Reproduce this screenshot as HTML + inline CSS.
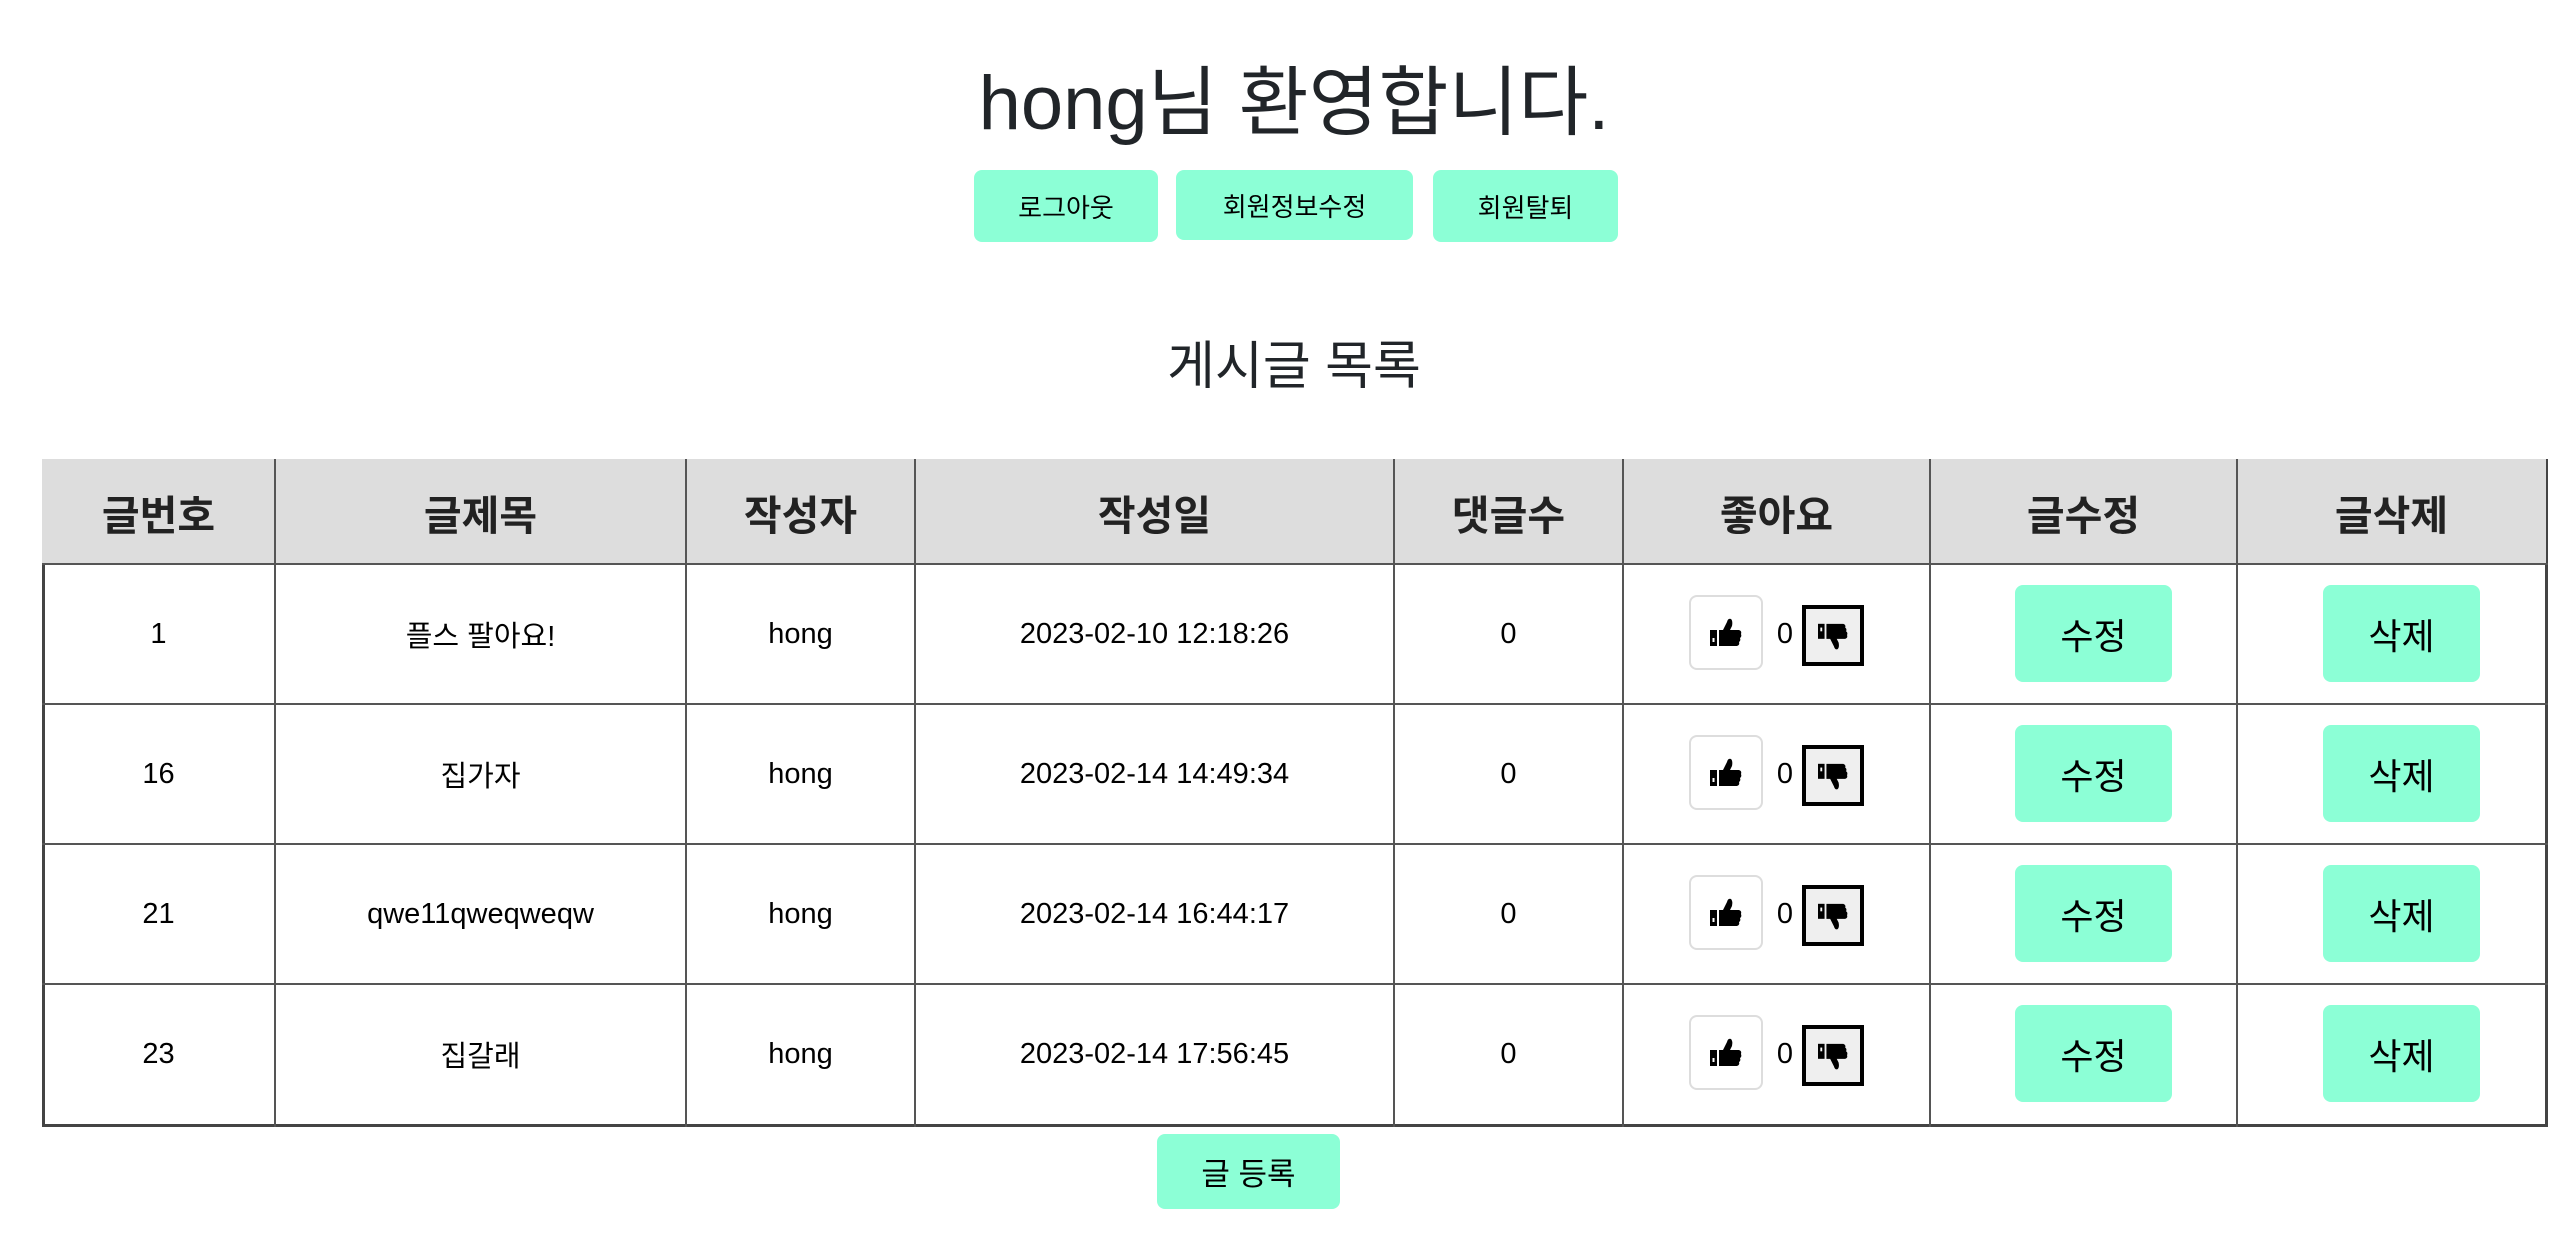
<!DOCTYPE html>
<html><head><meta charset="utf-8"><style>
body{margin:0;width:2562px;height:1238px;background:#fff;font-family:"Liberation Sans","Noto Sans CJK KR",sans-serif;color:#212529;position:relative;overflow:hidden}
.a{position:absolute}
.btn{position:absolute;background:#8cffd6;border-radius:8px;display:flex;align-items:center;justify-content:center;color:#000}
.cell{position:absolute;display:flex;align-items:center;justify-content:center;box-sizing:border-box}
.h{background:#ddd;font-weight:bold;font-size:41px;color:#222}
.b{font-size:29px;color:#000}
.vl{position:absolute;top:459px;width:2px;height:668px;background:#555}
.hl{position:absolute;left:42px;width:2506px;height:2px;background:#555}
.like{position:absolute;left:1689px;width:74px;height:75px;border:2px solid #ddd;border-radius:8px;background:#fff;box-sizing:border-box;display:flex;align-items:center;justify-content:center}
.dis{position:absolute;left:1802px;width:62px;height:61px;border:4px solid #000;background:#efefef;box-sizing:border-box;display:flex;align-items:center;justify-content:center}
.cnt{position:absolute;left:1774px;width:22px;text-align:center;font-size:29px;color:#000}
</style></head><body>
<div class="a" style="left:0;width:2588px;top:49px;text-align:center;font-size:76px;line-height:110px">hong님 환영합니다.</div>
<div class="btn" style="left:974px;top:170px;width:184px;height:72px;font-size:26px">로그아웃</div>
<div class="btn" style="left:1176px;top:170px;width:237px;height:70px;font-size:26px">회원정보수정</div>
<div class="btn" style="left:1433px;top:170px;width:185px;height:72px;font-size:26px">회원탈퇴</div>
<div class="a" style="left:0;width:2588px;top:330px;text-align:center;font-size:52px;line-height:74px">게시글 목록</div>

<div class="a" style="left:42px;top:459px;width:2506px;height:668px;border:3px solid #444;box-sizing:border-box"></div>
<div class="a" style="left:45px;top:462px;width:2500px;height:101px;background:#ddd"></div>
<div class="cell h" style="left:42px;top:459px;width:233px;height:105px">글번호</div>
<div class="cell h" style="left:275px;top:459px;width:411px;height:105px">글제목</div>
<div class="cell h" style="left:686px;top:459px;width:229px;height:105px">작성자</div>
<div class="cell h" style="left:915px;top:459px;width:479px;height:105px">작성일</div>
<div class="cell h" style="left:1394px;top:459px;width:229px;height:105px">댓글수</div>
<div class="cell h" style="left:1623px;top:459px;width:307px;height:105px">좋아요</div>
<div class="cell h" style="left:1930px;top:459px;width:307px;height:105px">글수정</div>
<div class="cell h" style="left:2237px;top:459px;width:309px;height:105px">글삭제</div>

<div class="vl" style="left:274px"></div><div class="vl" style="left:685px"></div><div class="vl" style="left:914px"></div><div class="vl" style="left:1393px"></div><div class="vl" style="left:1622px"></div><div class="vl" style="left:1929px"></div><div class="vl" style="left:2236px"></div>
<div class="hl" style="top:563px"></div><div class="hl" style="top:703px"></div><div class="hl" style="top:843px"></div><div class="hl" style="top:983px"></div>

<svg width="0" height="0" style="position:absolute"><defs>
<g id="up"><rect x="0" y="12" width="7" height="16" fill="#000"/><rect x="2.5" y="20" width="2" height="4" fill="#fff"/><path d="M9 12 L13 12 L17 4 Q18 0 21 1 Q23 3 22 8 L20 12 L29 12 Q32 13 31 16 Q32 19 30 20 Q31 23 29 24 Q30 27 27 28 L9 28 Z" fill="#000"/></g>
</defs></svg>

<div class="cell b" style="left:42px;top:564px;width:233px;height:140px">1</div>
<div class="cell b" style="left:275px;top:564px;width:411px;height:140px">플스 팔아요!</div>
<div class="cell b" style="left:686px;top:564px;width:229px;height:140px">hong</div>
<div class="cell b" style="left:915px;top:564px;width:479px;height:140px">2023-02-10 12:18:26</div>
<div class="cell b" style="left:1394px;top:564px;width:229px;height:140px">0</div>

<div class="cell b" style="left:42px;top:704px;width:233px;height:140px">16</div>
<div class="cell b" style="left:275px;top:704px;width:411px;height:140px">집가자</div>
<div class="cell b" style="left:686px;top:704px;width:229px;height:140px">hong</div>
<div class="cell b" style="left:915px;top:704px;width:479px;height:140px">2023-02-14 14:49:34</div>
<div class="cell b" style="left:1394px;top:704px;width:229px;height:140px">0</div>

<div class="cell b" style="left:42px;top:844px;width:233px;height:140px">21</div>
<div class="cell b" style="left:275px;top:844px;width:411px;height:140px">qwe11qweqweqw</div>
<div class="cell b" style="left:686px;top:844px;width:229px;height:140px">hong</div>
<div class="cell b" style="left:915px;top:844px;width:479px;height:140px">2023-02-14 16:44:17</div>
<div class="cell b" style="left:1394px;top:844px;width:229px;height:140px">0</div>

<div class="cell b" style="left:42px;top:984px;width:233px;height:140px">23</div>
<div class="cell b" style="left:275px;top:984px;width:411px;height:140px">집갈래</div>
<div class="cell b" style="left:686px;top:984px;width:229px;height:140px">hong</div>
<div class="cell b" style="left:915px;top:984px;width:479px;height:140px">2023-02-14 17:56:45</div>
<div class="cell b" style="left:1394px;top:984px;width:229px;height:140px">0</div>

<div class="like" style="top:595px"><svg width="32" height="30" viewBox="0 0 32 30"><use href="#up"/></svg></div>
<div class="cnt" style="top:618px">0</div>
<div class="dis" style="top:605px"><svg width="30" height="30" viewBox="0 0 32 30"><g transform="translate(0,30) scale(1,-1)"><use href="#up"/></g></svg></div>

<div class="like" style="top:735px"><svg width="32" height="30" viewBox="0 0 32 30"><use href="#up"/></svg></div>
<div class="cnt" style="top:758px">0</div>
<div class="dis" style="top:745px"><svg width="30" height="30" viewBox="0 0 32 30"><g transform="translate(0,30) scale(1,-1)"><use href="#up"/></g></svg></div>

<div class="like" style="top:875px"><svg width="32" height="30" viewBox="0 0 32 30"><use href="#up"/></svg></div>
<div class="cnt" style="top:898px">0</div>
<div class="dis" style="top:885px"><svg width="30" height="30" viewBox="0 0 32 30"><g transform="translate(0,30) scale(1,-1)"><use href="#up"/></g></svg></div>

<div class="like" style="top:1015px"><svg width="32" height="30" viewBox="0 0 32 30"><use href="#up"/></svg></div>
<div class="cnt" style="top:1038px">0</div>
<div class="dis" style="top:1025px"><svg width="30" height="30" viewBox="0 0 32 30"><g transform="translate(0,30) scale(1,-1)"><use href="#up"/></g></svg></div>

<div class="btn" style="left:2015px;top:585px;width:157px;height:97px;font-size:36px">수정</div>
<div class="btn" style="left:2323px;top:585px;width:157px;height:97px;font-size:36px">삭제</div>
<div class="btn" style="left:2015px;top:725px;width:157px;height:97px;font-size:36px">수정</div>
<div class="btn" style="left:2323px;top:725px;width:157px;height:97px;font-size:36px">삭제</div>
<div class="btn" style="left:2015px;top:865px;width:157px;height:97px;font-size:36px">수정</div>
<div class="btn" style="left:2323px;top:865px;width:157px;height:97px;font-size:36px">삭제</div>
<div class="btn" style="left:2015px;top:1005px;width:157px;height:97px;font-size:36px">수정</div>
<div class="btn" style="left:2323px;top:1005px;width:157px;height:97px;font-size:36px">삭제</div>

<div class="btn" style="left:1157px;top:1134px;width:183px;height:75px;font-size:31px">글 등록</div>
</body></html>
